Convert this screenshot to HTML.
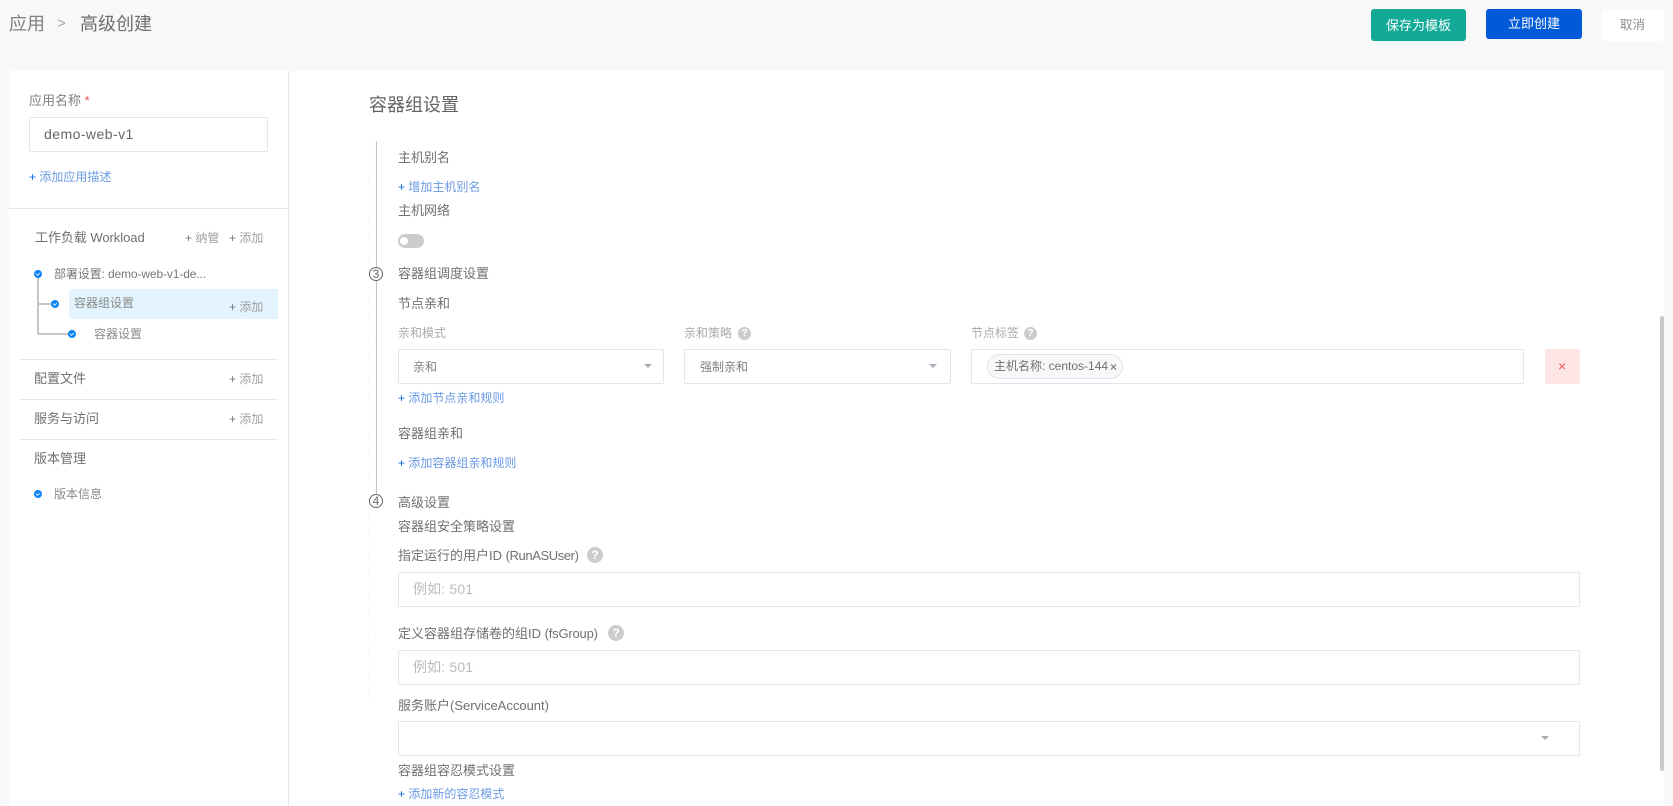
<!DOCTYPE html>
<html lang="zh">
<head>
<meta charset="utf-8">
<title>高级创建</title>
<style>
html,body{margin:0;padding:0;width:1673px;height:806px;overflow:hidden;background:#f8f8f9;font-family:"Liberation Sans","Noto Sans CJK SC",sans-serif;color:#666}
div,span{box-sizing:border-box}
.a{position:absolute}
.t{position:absolute;white-space:nowrap;line-height:20px;height:20px;font-size:13px;color:#707070}
.s{font-size:12px;color:#8a8a8a}
.l{font-size:12px;color:#6a9ae2}
.l b{font-weight:400;color:#0a6ee0}
.add b{font-weight:400;color:#777}
.add{font-size:12px;color:#a0a0a0}
.box{position:absolute;background:#fff;border:1px solid #e3e5ed;border-radius:2px}
.dot{position:absolute;width:8px;height:8px;border-radius:50%;background:#0a84f5}
.dot:after{content:"";position:absolute;left:2px;top:2px;width:3px;height:2px;border-left:1px solid #cfe6ff;border-bottom:1px solid #cfe6ff;transform:rotate(-45deg)}
.hr{position:absolute;height:1px;background:#e8e9ee}
.q{position:absolute;border-radius:50%;background:#ccc;color:#fff;font-weight:700;text-align:center}
.arrow{position:absolute;width:0;height:0;border-left:4px solid transparent;border-right:4px solid transparent;border-top:4px solid #a9adb8}
.c{position:absolute;width:14px;height:14px;border:1px solid #666;border-radius:50%;background:#fff;font-size:12px;line-height:12px;text-align:center;color:#666}
</style>
</head>
<body>
<!-- header -->
<div class="t" style="left:9px;top:14px;font-size:18px;color:#808080">应用</div>
<div class="t" style="left:57px;top:14px;font-size:15px;color:#aaa">&gt;</div>
<div class="t" style="left:80px;top:14px;font-size:18px;color:#6e6e6e">高级创建</div>
<div class="a" style="left:1371px;top:9px;width:95px;height:32px;background:#12a997;border-radius:3px"></div>
<div class="t" style="left:1386px;top:16px;color:#fff">保存为模板</div>
<div class="a" style="left:1486px;top:9px;width:96px;height:30px;background:#0059d6;border-radius:3px"></div>
<div class="t" style="left:1508px;top:14px;color:#fff">立即创建</div>
<div class="a" style="left:1602px;top:9px;width:62px;height:32px;background:#fff;border-radius:3px"></div>
<div class="t" style="left:1620px;top:15px;font-size:12.5px;color:#8f8f8f">取消</div>

<!-- panels -->
<div class="a" style="left:9px;top:71px;width:1655px;height:735px;background:#fff"></div>
<div class="a" style="left:288px;top:71px;width:1px;height:735px;background:#e3e8f0"></div>

<!-- sidebar -->
<div class="t" style="left:29px;top:91px;color:#808080">应用名称 <span style="color:#f0505a">*</span></div>
<div class="box" style="left:29px;top:117px;width:239px;height:35px"></div>
<div class="t" style="left:44px;top:124px;font-size:14px;color:#666;letter-spacing:.45px">demo-web-v1</div>
<div class="t l" style="left:29px;top:167px"><b>+</b> 添加应用描述</div>
<div class="a" style="left:9px;top:208px;width:279px;height:1px;background:#e3e8f0"></div>

<div class="t" style="left:35px;top:228px;letter-spacing:-.05px">工作负载 Workload</div>
<div class="t add" style="left:185px;top:228px"><b>+</b> 纳管</div>
<div class="t add" style="left:229px;top:228px"><b>+</b> 添加</div>

<div class="a" style="left:69px;top:289px;width:209px;height:30px;background:#e3f4fe"></div>
<div class="a" style="left:37px;top:274px;width:2px;height:59px;background:#c6c6c6"></div>
<div class="a" style="left:37px;top:303px;width:18px;height:2px;background:#c6c6c6"></div>
<div class="a" style="left:37px;top:332px;width:35px;height:3px;border-left:2px solid #c6c6c6;border-bottom:2px solid #c6c6c6;border-bottom-left-radius:2px"></div>
<div class="dot" style="left:34px;top:270px"></div>
<div class="dot" style="left:51px;top:300px"></div>
<div class="dot" style="left:68px;top:330px"></div>
<div class="t s" style="left:54px;top:264px;color:#777;letter-spacing:-.12px">部署设置: demo-web-v1-de...</div>
<div class="t s" style="left:74px;top:293px">容器组设置</div>
<div class="t add" style="left:229px;top:297px"><b>+</b> 添加</div>
<div class="t s" style="left:94px;top:324px">容器设置</div>
<div class="hr" style="left:19px;top:359px;width:259px"></div>
<div class="t" style="left:34px;top:369px">配置文件</div>
<div class="t add" style="left:229px;top:369px"><b>+</b> 添加</div>
<div class="hr" style="left:19px;top:399px;width:259px"></div>
<div class="t" style="left:34px;top:409px">服务与访问</div>
<div class="t add" style="left:229px;top:409px"><b>+</b> 添加</div>
<div class="hr" style="left:19px;top:439px;width:259px"></div>
<div class="t" style="left:34px;top:449px">版本管理</div>
<div class="dot" style="left:34px;top:490px"></div>
<div class="t s" style="left:54px;top:484px">版本信息</div>

<!-- main -->
<div class="t" style="left:369px;top:95px;font-size:18px;color:#636363">容器组设置</div>
<div class="a" style="left:368px;top:141px;width:0;height:560px;border-left:1px dashed #f8f8f8"></div>
<div class="a" style="left:376px;top:141px;width:1px;height:360px;background:#c4c4c4"></div>

<div class="t" style="left:398px;top:148px">主机别名</div>
<div class="t l" style="left:398px;top:177px"><b>+</b> 增加主机别名</div>
<div class="t" style="left:398px;top:201px">主机网络</div>
<div class="a" style="left:398px;top:234px;width:26px;height:14px;border-radius:7px;background:#ccc"></div>
<div class="a" style="left:400px;top:237px;width:8px;height:8px;border-radius:50%;background:#fff"></div>

<div class="c" style="left:369px;top:267px">3</div>
<div class="t" style="left:398px;top:264px">容器组调度设置</div>
<div class="t" style="left:398px;top:294px">节点亲和</div>

<div class="t s" style="left:398px;top:323px;color:#aaa">亲和模式</div>
<div class="t s" style="left:684px;top:323px;color:#aaa">亲和策略</div>
<div class="q" style="left:738px;top:327px;width:13px;height:13px;font-size:10px;line-height:13px">?</div>
<div class="t s" style="left:971px;top:323px;color:#aaa">节点标签</div>
<div class="q" style="left:1024px;top:327px;width:13px;height:13px;font-size:10px;line-height:13px">?</div>

<div class="box" style="left:398px;top:349px;width:266px;height:35px"></div>
<div class="t s" style="left:413px;top:357px;color:#808080">亲和</div>
<div class="arrow" style="left:644px;top:364px"></div>
<div class="box" style="left:684px;top:349px;width:267px;height:35px"></div>
<div class="t s" style="left:700px;top:357px;color:#808080">强制亲和</div>
<div class="arrow" style="left:929px;top:364px"></div>
<div class="box" style="left:971px;top:349px;width:553px;height:35px"></div>
<div class="a" style="left:987px;top:354px;width:136px;height:25px;border-radius:13px;background:#f8f8fa;border:1px solid #e1e4ec"></div>
<div class="t s" style="left:994px;top:356px;color:#707070">主机名称: centos-144</div>
<div class="t" style="left:1110px;top:357px;font-size:12px;font-weight:700;color:#888">×</div>
<div class="a" style="left:1545px;top:349px;width:35px;height:35px;background:#fde5e5;border-radius:2px"></div>
<div class="t" style="left:1558px;top:356px;font-size:14px;color:#f5565a">×</div>

<div class="t l" style="left:398px;top:388px"><b>+</b> 添加节点亲和规则</div>
<div class="t" style="left:398px;top:424px">容器组亲和</div>
<div class="t l" style="left:398px;top:453px"><b>+</b> 添加容器组亲和规则</div>

<div class="c" style="left:369px;top:494px">4</div>
<div class="t" style="left:398px;top:493px">高级设置</div>
<div class="t" style="left:398px;top:517px">容器组安全策略设置</div>

<div class="t" style="left:398px;top:546px">指定运行的用户ID <span style="letter-spacing:-.4px">(RunASUser)</span></div>
<div class="q" style="left:587px;top:547px;width:16px;height:16px;font-size:12px;line-height:16px">?</div>
<div class="box" style="left:398px;top:572px;width:1182px;height:35px"></div>
<div class="t" style="left:413px;top:579px;font-size:14px;color:#bbb;letter-spacing:.15px">例如: 501</div>

<div class="t" style="left:398px;top:624px">定义容器组存储卷的组ID <span style="letter-spacing:-.2px">(fsGroup)</span></div>
<div class="q" style="left:608px;top:625px;width:16px;height:16px;font-size:12px;line-height:16px">?</div>
<div class="box" style="left:398px;top:650px;width:1182px;height:35px"></div>
<div class="t" style="left:413px;top:657px;font-size:14px;color:#bbb;letter-spacing:.15px">例如: 501</div>

<div class="t" style="left:398px;top:696px">服务账户(ServiceAccount)</div>
<div class="box" style="left:398px;top:721px;width:1182px;height:35px"></div>
<div class="arrow" style="left:1541px;top:736px"></div>

<div class="t" style="left:398px;top:761px">容器组容忍模式设置</div>
<div class="t l" style="left:398px;top:784px"><b>+</b> 添加新的容忍模式</div>

<!-- scrollbar -->
<div class="a" style="left:1660px;top:316px;width:4px;height:455px;background:#c9c9c9;border-radius:2px"></div>
</body>
</html>
